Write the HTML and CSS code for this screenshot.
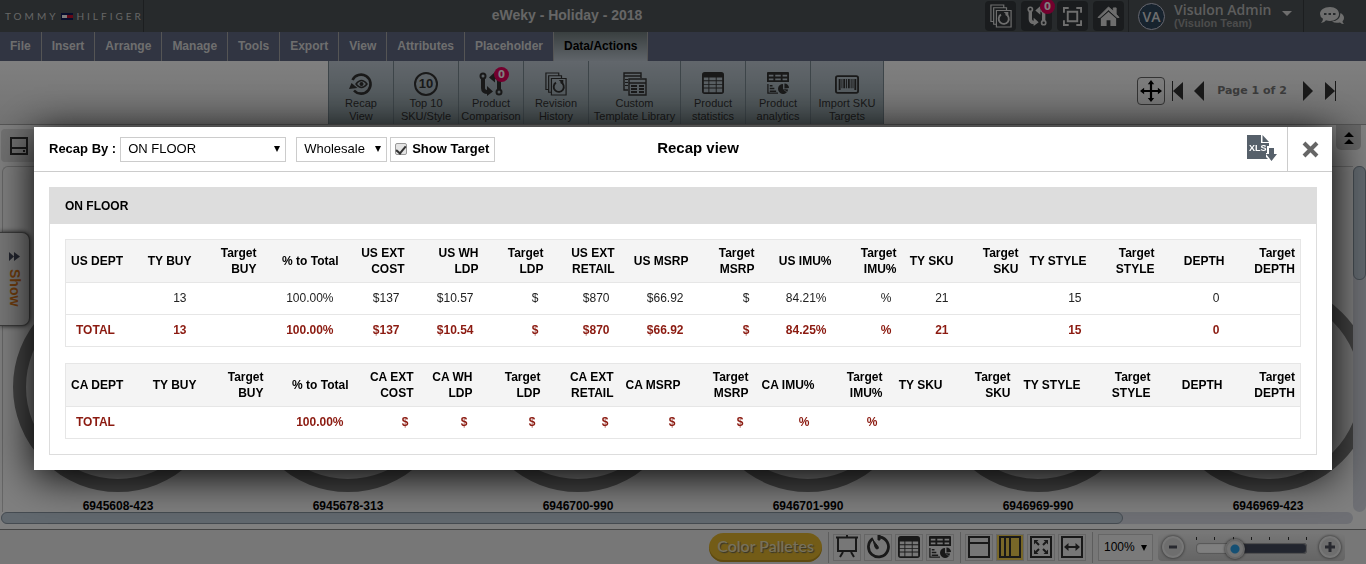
FILE: index.html
```html
<!DOCTYPE html>
<html lang="en">
<head>
<meta charset="utf-8">
<title>eWeky - Holiday - 2018</title>
<link rel="stylesheet" href="styles.css">
</head>
<body>
<svg class="sprite" aria-hidden="true">
  <symbol id="recap" viewBox="0 0 24 24"><path d="M3.500 8A9.500 9.500 0 1 1 5 18.500" fill="none" stroke="currentColor" stroke-width="2.600"/><path d="M0 17l2.500-6 6 5z" fill="currentColor"/><path d="M7 12q5.500-7 11 0q-5.500 7-11 0z" fill="none" stroke="currentColor" stroke-width="1.400"/><circle cx="12.500" cy="12" r="2" fill="currentColor"/></symbol>
  <symbol id="compare" viewBox="0 0 24 24"><g fill="none" stroke="currentColor"><circle cx="4" cy="4" r="2.500" stroke-width="2"/><circle cx="20" cy="20" r="2.500" stroke-width="2"/><path d="M4 7v9q0 4 5 4M20 17V9q0-4-4-4" stroke-width="4"/></g><path d="M8 14l6 5.500L8 24zM16 0L10 5.500l6 5z" fill="currentColor"/></symbol>
  <symbol id="history" viewBox="0 0 24 26"><g fill="none" stroke="currentColor" stroke-width="1.300"><path d="M4 19H1V1h14v3M7 22H4V4h14v3"/><path d="M7 7h16v18H7z"/><path d="M12 11.500a5.500 5.500 0 1 0 5-0.500" stroke-width="2"/></g><path d="M15 8.500h5v5z" fill="currentColor"/></symbol>
  <symbol id="template" viewBox="0 0 24 24"><g fill="none" stroke="currentColor" stroke-width="1.400"><path d="M5 18H1V1h17v5M1 4h17M6 7h17v16H6zM6 11h17"/></g><path d="M8 13h6v2H8zm0 3h6v2H8zm0 3h6v2H8zm8-6h5v2h-5zm0 3h5v2h-5zm0 3h5v2h-5zM2 7h3v1H2zm0 3h3v1H2zm0 3h3v1H2z" fill="currentColor"/></symbol>
  <symbol id="table" viewBox="0 0 24 24"><path d="M3 0h18q3 0 3 3v18q0 3-3 3H3q-3 0-3-3V3q0-3 3-3zM2 6v3h5V6zm6 0v3h7V6zm8 0v3h6V6zM2 10v3h5v-3zm6 0v3h7v-3zm8 0v3h6v-3zM2 14v3h5v-3zm6 0v3h7v-3zm8 0v3h6v-3zM2 18v4h5v-4zm6 0v4h7v-4zm8 0v4h6v-4z" fill="currentColor" fill-rule="evenodd"/></symbol>
  <symbol id="analytics" viewBox="0 0 24 24"><path d="M1 0h22q1 0 1 1v10H0V1q0-1 1-1zM2 3v2h5V3zm7 0v2h6V3zm8 0v2h5V3zM2 7v2h5V7zm7 0v2h6V7zm8 0v2h5V7z" fill="currentColor" fill-rule="evenodd"/><path d="M1 13v10h11M3 15h3M3 18h5M3 21h7" fill="none" stroke="currentColor" stroke-width="1.400"/><path d="M17.500 18.500V13a5.500 5.500 0 1 0 5.500 6z" fill="currentColor"/><path d="M19 12.500a5 5 0 0 1 5 5l-5 .5z" fill="currentColor"/><path d="M18 19l4 3" stroke="#929aa0"/></symbol>
  <symbol id="barcode" viewBox="0 0 26 20"><rect x="1" y="1" width="24" height="18" rx="2" fill="none" stroke="currentColor" stroke-width="2"/><path d="M4 4h2v12H4zm3 0h1v10H7zm2 0h2v10H9zm3 0h1v10h-1zm2 0h2v10h-2zm3 0h1v10h-1zm2 0h1v10h-1zm2 0h2v12h-2z" fill="currentColor"/></symbol>
  <symbol id="expand" viewBox="0 0 20 20"><path d="M1 6V1h5M14 1h5v5M19 14v5h-5M6 19H1v-5M5 5h10v10H5z" fill="none" stroke="currentColor" stroke-width="2"/></symbol>
  <symbol id="home" viewBox="0 0 24 22"><path d="M12 1L1 12h2L12 4l9 8h2L20 8.500V2h-3v3.500z" fill="currentColor" stroke="currentColor"/><path d="M12 6l8 7v8h-6v-6h-4v6H4v-8z" fill="currentColor"/></symbol>
  <symbol id="chat" viewBox="0 0 24 18"><path d="M10 0c5.500 0 9 3 9 7s-4 7-9 7q-2 0-4-.7Q4 16 1 16q2-2 2-4.200Q0 10 0 7c0-4 4-7 10-7z" fill="currentColor"/><path d="M20.500 6q3.500 2 3.500 5 0 2-1.500 3.200 0 1.500 1.500 2.800-2.500 0-4-1.500-5 1-8-1 8-.5 8.500-8.500z" fill="currentColor"/><path d="M4 6h2.500v2H4zm4.500 0H11v2H8.500zM13 6h2.500v2H13z" fill="#4e5558"/></symbol>
  <symbol id="move" viewBox="0 0 24 24"><path d="M12 3v18M3 12h18" stroke="currentColor" stroke-width="2.400"/><path d="M12 0l3.500 4.500h-7zM12 24l3.500-4.500h-7zM0 12l4.500-3.500v7zM24 12l-4.500-3.500v7z" fill="currentColor"/></symbol>
  <symbol id="prev" viewBox="0 0 10 20"><path d="M10 0v20L0 10z" fill="currentColor"/></symbol>
  <symbol id="first" viewBox="0 0 11 20"><path d="M0 0h1v20H0zM11 1v18L1 10z" fill="currentColor"/></symbol>
  <symbol id="disk" viewBox="0 0 18 18"><path d="M1 1h16v16H1zM1 11h16" fill="none" stroke="currentColor" stroke-width="2"/><path d="M13 13h2v2h-2z" fill="currentColor"/></symbol>
  <symbol id="easel" viewBox="0 0 24 24"><path d="M1 2.500h22M3 3v13h18V3M8 17l-3 5M16 17l3 5M12 0v2" fill="none" stroke="currentColor" stroke-width="2"/></symbol>
  <symbol id="timer" viewBox="0 0 24 24"><path d="M7 3.500A10 10 0 1 0 14 2" fill="none" stroke="currentColor" stroke-width="2.800"/><path d="M7 5l5 6.500q1 2-.5 2.500T9 12zM12 0h2v5h-2z" fill="currentColor" stroke="currentColor"/></symbol>
  <symbol id="rows" viewBox="0 0 24 24"><path d="M2 2h20v20H2zM2 8h20" fill="none" stroke="currentColor" stroke-width="2"/></symbol>
  <symbol id="cols" viewBox="0 0 24 24"><path d="M2 2h20v20H2zM7 2v20M12 2v20" fill="none" stroke="currentColor" stroke-width="2"/></symbol>
  <symbol id="fit" viewBox="0 0 24 24"><path d="M2 2h20v20H2zM7 7l3 3M17 7l-3 3M7 17l3-3M17 17l-3-3" fill="none" stroke="currentColor" stroke-width="2"/><path d="M5 5h4.500L5 9.500zM19 5v4.500L14.500 5zM5 19v-4.500L9.500 19zM19 19h-4.500l4.500-4.500z" fill="currentColor"/></symbol>
  <symbol id="wide" viewBox="0 0 24 24"><path d="M2 2h20v20H2zM6 12h12" fill="none" stroke="currentColor" stroke-width="2"/><path d="M4 12l4.500-4v8zM20 12l-4.500-4v8z" fill="currentColor"/></symbol>
</svg>

<header class="topbar">
  <a class="brand" href="#" aria-label="Tommy Hilfiger"><span>TOMMY</span><svg width="12" height="7" viewBox="0 0 12 7"><path d="M0 0h12v7H0z" fill="#131b58"/><path d="M1 2h5v3H1z" fill="#fff"/><path d="M6 2h6v3H6z" fill="#c8102e"/></svg><span>HILFIGER</span></a>
  <h1 class="doc-title">eWeky - Holiday - 2018</h1>
  <div class="quick">
    <button aria-label="History"><svg width="22" height="24"><use href="#history"/></svg></button>
    <button aria-label="Compare"><svg width="20" height="20"><use href="#compare"/></svg><b class="badge">0</b></button>
    <button aria-label="Full screen"><svg width="19" height="19"><use href="#expand"/></svg></button>
    <button aria-label="Home"><svg width="23" height="21"><use href="#home"/></svg></button>
  </div>
  <button class="user"><span class="avatar">VA</span><span class="who"><b>Visulon Admin</b><small>(Visulon Team)</small></span><i class="caret"></i></button>
  <button class="chat" aria-label="Chat"><svg width="24" height="18"><use href="#chat"/></svg></button>
</header>

<nav class="menu">
  <a href="#">File</a><a href="#">Insert</a><a href="#">Arrange</a><a href="#">Manage</a><a href="#">Tools</a><a href="#">Export</a><a href="#">View</a><a href="#">Attributes</a><a href="#">Placeholder</a><a href="#" class="active">Data/Actions</a>
</nav>

<div class="toolbar">
  <div class="tools">
    <button><svg width="24" height="24"><use href="#recap"/></svg><span>Recap<br>View</span></button>
    <button><i class="ten">10</i><span>Top 10<br>SKU/Style</span></button>
    <button><svg width="24" height="24"><use href="#compare"/></svg><b class="badge">0</b><span>Product<br>Comparison</span></button>
    <button><svg width="22" height="24"><use href="#history"/></svg><span>Revision<br>History</span></button>
    <button class="wide"><svg width="24" height="24"><use href="#template"/></svg><span>Custom<br>Template Library</span></button>
    <button><svg class="high" width="22" height="22"><use href="#table"/></svg><span>Product<br>statistics</span></button>
    <button><svg class="high" width="22" height="22"><use href="#analytics"/></svg><span>Product<br>analytics</span></button>
    <button class="mid"><svg class="high" width="24" height="19"><use href="#barcode"/></svg><span>Import SKU<br>Targets</span></button>
  </div>
  <div class="pager">
    <button class="move" aria-label="Move"><svg width="22" height="22"><use href="#move"/></svg></button>
    <button aria-label="First page"><svg width="11" height="20"><use href="#first"/></svg></button>
    <button class="prev" aria-label="Previous page"><svg width="10" height="20"><use href="#prev"/></svg></button>
    <span>Page 1 of 2</span>
    <button class="next" aria-label="Next page"><svg class="flip" width="10" height="20"><use href="#prev"/></svg></button>
    <button aria-label="Last page"><svg class="flip" width="11" height="20"><use href="#first"/></svg></button>
  </div>
</div>

<main class="stage">
  <button class="save" aria-label="Save"><svg width="18" height="18"><use href="#disk"/></svg></button>
  <button class="collapse" aria-label="Collapse"><svg width="10" height="12" viewBox="0 0 10 12"><path d="M5 0l5 5H0zM5 7l5 5H0z"/></svg></button>
  <button class="show"><svg width="11" height="9" viewBox="0 0 11 9"><path d="M0 0l5 4.500L0 9zM5 0l6 4.500L5 9z" fill="#454a5c"/></svg><span>Show</span></button>
  <div class="canvas">
    <div class="items">
      <figure><div class="ring"></div><figcaption>6945608-423</figcaption></figure>
      <figure><div class="ring"></div><figcaption>6945678-313</figcaption></figure>
      <figure><div class="ring"></div><figcaption>6946700-990</figcaption></figure>
      <figure><div class="ring"></div><figcaption>6946701-990</figcaption></figure>
      <figure><div class="ring"></div><figcaption>6946969-990</figcaption></figure>
      <figure><div class="ring"></div><figcaption>6946969-423</figcaption></figure>
    </div>
    <div class="vscroll"><i></i></div>
  </div>
  <div class="hscroll"><i></i></div>
</main>

<footer class="status">
  <button class="palette">Color Palletes</button>
  <div class="group">
    <button aria-label="Present"><svg width="24" height="24"><use href="#easel"/></svg></button>
    <button aria-label="Timer"><svg width="24" height="24"><use href="#timer"/></svg></button>
    <button aria-label="Statistics"><svg width="22" height="22"><use href="#table"/></svg></button>
    <button aria-label="Analytics"><svg width="22" height="22"><use href="#analytics"/></svg></button>
  </div>
  <div class="group">
    <button aria-label="Rows"><svg width="24" height="24"><use href="#rows"/></svg></button>
    <button class="on" aria-label="Columns"><svg width="24" height="24"><use href="#cols"/></svg></button>
    <button aria-label="Fit page"><svg width="24" height="24"><use href="#fit"/></svg></button>
    <button aria-label="Fit width"><svg width="24" height="24"><use href="#wide"/></svg></button>
  </div>
  <div class="group zoom">
    <span class="pick"><select aria-label="Zoom level"><option>100%</option></select></span>
    <div class="slider">
      <button aria-label="Zoom out"><svg width="10" height="10" viewBox="0 0 10 10"><path d="M1 5h8" stroke="#50535f" stroke-width="3"/></svg></button>
      <div class="track"><div class="ticks"><i></i><i></i><i></i><i></i><i></i><i></i><i></i></div><input type="range" min="0" max="100" value="32" aria-label="Zoom"></div>
      <button aria-label="Zoom in"><svg width="10" height="10" viewBox="0 0 10 10"><path d="M0 5h10M5 0v10" stroke="#50535f" stroke-width="3"/></svg></button>
    </div>
  </div>
</footer>

<div class="overlay">
  <section class="dialog" role="dialog" aria-labelledby="dlg-title">
    <div class="dlg-head">
      <form class="filters">
        <label for="by">Recap By :</label>
        <span class="pick floor"><select id="by"><option>ON FLOOR</option></select></span>
        <span class="pick price"><select aria-label="Price type"><option>Wholesale</option></select></span>
        <label class="check"><input type="checkbox" checked>Show Target</label>
      </form>
      <h2 id="dlg-title">Recap view</h2>
      <div class="dlg-actions">
        <button class="xls" aria-label="Download XLS"><svg width="30" height="27" viewBox="0 0 30 27"><path d="M0 0h14v8h8v3h-2v7h-1v4l2 2H0z" fill="#56606a"/><path d="M15.500 0L22 7h-6.500zM22 13h5v6h3l-5.500 7L19 19h3z" fill="#56606a"/><text x="2" y="16">XLS</text></svg></button>
        <button class="close" aria-label="Close"><svg width="17" height="17" viewBox="0 0 17 17"><path d="M2 2l13 13M15 2L2 15" stroke="#666" stroke-width="4"/></svg></button>
      </div>
    </div>
    <div class="dlg-body">
      <section class="panel">
        <h3>ON FLOOR</h3>
        <div class="panel-body">
          <table class="us">
            <colgroup><col><col><col><col><col><col><col><col><col><col><col><col><col><col><col><col><col><col></colgroup>
            <thead><tr><th>US DEPT</th><th>TY BUY</th><th>Target<br>BUY</th><th>% to Total</th><th>US EXT<br>COST</th><th>US WH<br>LDP</th><th>Target<br>LDP</th><th>US EXT<br>RETAIL</th><th>US MSRP</th><th>Target<br>MSRP</th><th>US IMU%</th><th>Target<br>IMU%</th><th>TY SKU</th><th>Target<br>SKU</th><th>TY STYLE</th><th>Target<br>STYLE</th><th>DEPTH</th><th>Target<br>DEPTH</th></tr></thead>
            <tbody>
              <tr><td></td><td>13</td><td></td><td>100.00%</td><td>$137</td><td>$10.57</td><td>$</td><td>$870</td><td>$66.92</td><td>$</td><td>84.21%</td><td>%</td><td>21</td><td></td><td>15</td><td></td><td>0</td><td></td></tr>
              <tr class="total"><td>TOTAL</td><td>13</td><td></td><td>100.00%</td><td>$137</td><td>$10.54</td><td>$</td><td>$870</td><td>$66.92</td><td>$</td><td>84.25%</td><td>%</td><td>21</td><td></td><td>15</td><td></td><td>0</td><td></td></tr>
            </tbody>
          </table>
          <table class="ca">
            <colgroup><col><col><col><col><col><col><col><col><col><col><col><col><col><col><col><col><col><col></colgroup>
            <thead><tr><th>CA DEPT</th><th>TY BUY</th><th>Target<br>BUY</th><th>% to Total</th><th>CA EXT<br>COST</th><th>CA WH<br>LDP</th><th>Target<br>LDP</th><th>CA EXT<br>RETAIL</th><th>CA MSRP</th><th>Target<br>MSRP</th><th>CA IMU%</th><th>Target<br>IMU%</th><th>TY SKU</th><th>Target<br>SKU</th><th>TY STYLE</th><th>Target<br>STYLE</th><th>DEPTH</th><th>Target<br>DEPTH</th></tr></thead>
            <tbody>
              <tr class="total"><td>TOTAL</td><td></td><td></td><td>100.00%</td><td>$</td><td>$</td><td>$</td><td>$</td><td>$</td><td>$</td><td>%</td><td>%</td><td></td><td></td><td></td><td></td><td></td><td></td></tr>
            </tbody>
          </table>
        </div>
      </section>
    </div>
  </section>
</div>
</body>
</html>
```

FILE: styles.css
```css
* { box-sizing: border-box; }
html, body { height: 100%; }
body { margin: 0; display: flex; flex-direction: column; overflow: hidden; background: #fff; color: #000; font: 12px/16px "Liberation Sans", Arial, sans-serif; }
button, select, input { font: inherit; color: inherit; }
button { display: flex; align-items: center; justify-content: center; margin: 0; padding: 0; border: 0; background: none; }
svg { display: block; flex: none; }
a { color: inherit; text-decoration: none; }
h1, h2, h3, figure { margin: 0; }
.sprite { position: absolute; width: 0; height: 0; }

/* top bar */
.topbar { position: relative; flex: none; display: flex; height: 32px; background: #4e5558; color: #ddd; }
.brand { display: flex; align-items: center; gap: 3px; width: 144px; padding-left: 5px; border-right: 1px solid #383d40; color: #ccc; font: 10px/32px Lato, sans-serif; letter-spacing: 3px; }
.doc-title { flex: 1; padding-left: 5px; text-align: center; font-size: 14px; line-height: 31px; color: #ccc; }
.quick { display: flex; gap: 5px; padding: 1px 4px 1px 0; border-right: 1px solid #383d40; }
.quick button { position: relative; width: 31px; border-radius: 4px; background: #34393c; }
.badge { position: absolute; display: flex; align-items: center; justify-content: center; width: 15px; height: 15px; border-radius: 8px; background: #e6005c; color: #fff; font: 700 10px/15px "DejaVu Sans", sans-serif; }
.quick .badge { top: -2px; right: -3px; }
.user { gap: 9px; width: 175px; padding-left: 9px; justify-content: flex-start; border-right: 1px solid #383d40; }
.avatar { width: 27px; height: 27px; border: 1px solid #ccd; border-radius: 14px; background: #2e465c; text-align: center; font: 600 14px/25px "Open Sans", sans-serif; }
.who { display: flex; flex-direction: column; text-align: left; line-height: 12px; }
.who b { font: 600 14px/14px "Open Sans", sans-serif; color: #bbb; }
.who small { font-size: 11px; font-weight: 700; color: #999; }
.caret { width: 0; border: 5px solid transparent; border-top-color: #ddd; border-bottom: 0; margin-bottom: 6px; margin-left: 2px; }
.chat { width: 62px; padding-right: 6px; }

/* menu */
.menu { flex: none; display: flex; height: 29px; background: #626a84; color: #fff; font-weight: 700; }
.menu a { padding: 0 10px; border-right: 1px solid #aaa; line-height: 28px; color: #ddd; }
.menu .active { background: linear-gradient(#737f80, #c0cad4); color: #000; }

/* toolbar */
.toolbar { flex: none; display: flex; justify-content: space-between; height: 64px; background: linear-gradient(#fff, #e6e6e6); border-bottom: 1px solid #aaa; }
.tools { display: flex; margin-left: 328px; border-right: 1px solid #7b8b93; color: #333; }
.tools button { position: relative; flex-direction: column; justify-content: flex-end; gap: 1px; width: 65px; padding-bottom: 1px; border-left: 1px solid #7b8b93; background: linear-gradient(#c4ced8, #8fa0a4); font-size: 11px; line-height: 13px; }
.tools .wide { width: 92px; }
.tools .mid { width: 73px; }
.tools .high { margin-bottom: 2px; }
.tools .badge { top: 6px; right: 14px; }
.ten { width: 24px; height: 24px; border: 2px solid #333; border-radius: 12px; font: 700 13px/20px "Liberation Sans", sans-serif; }
.pager { display: flex; align-items: center; padding: 0 30px 4px 0; color: #333; }
.pager span { width: 96px; text-align: center; color: #777; font: 700 11px/16px "DejaVu Sans", sans-serif; }
.pager .move { width: 28px; height: 28px; margin-right: 7px; border: 1px solid #666; border-radius: 4px; color: #000; }
.pager .prev { margin-left: 11px; }
.pager .next { margin-right: 12px; margin-left: 3px; }
.flip { transform: scaleX(-1); }

/* stage */
.stage { position: relative; z-index: 0; flex: 1; min-height: 0; display: flex; flex-direction: column; padding-top: 41px; background: #fff; }
.save { position: absolute; left: 1px; top: 4px; width: 35px; height: 33px; border-radius: 4px; background: #e2e2e2; color: #333; }
.collapse { position: absolute; right: 5px; top: 0; width: 25px; height: 25px; border-radius: 0 0 5px 5px; background: #ccc; }
.show { position: absolute; z-index: 1; left: 0; top: 107px; width: 30px; height: 94px; flex-direction: column; gap: 8px; border: 1px solid #777; border-left: 0; border-radius: 0 8px 8px 0; background: #eee; box-shadow: 0 0 5px #333; }
.show span { writing-mode: vertical-rl; color: #e07a1a; font: 700 14px/16px "Liberation Sans", sans-serif; }
.canvas { flex: 1; min-height: 0; display: flex; justify-content: space-between; }
.items { flex: 1; display: flex; align-items: flex-end; overflow: hidden; margin-left: 2px; border: 1px solid #ccc; border-width: 1px 0 0 1px; border-radius: 6px 0 0; }
.items figure { flex: none; width: 230px; display: flex; flex-direction: column; align-items: center; gap: 9px; }
.ring { width: 210px; height: 210px; border: 13px solid #868686; border-radius: 50%; background: #f0f0f0; }
figcaption { line-height: 11px; font-weight: 700; }
.vscroll { flex: none; width: 13px; border-radius: 7px; background: #dcdfe8; }
.vscroll i { display: block; height: 114px; border: 1px solid #8a97a3; border-radius: 6px; background: #c3d0dc; }
.hscroll { flex: none; margin: 0 13px 5px 1px; height: 12px; border-radius: 6px; background: #dcdfe8; }
.hscroll i { display: block; width: 83%; height: 12px; border: 1px solid #8a97a3; border-radius: 6px; background: #c3d0dc; }

/* status bar */
.status { flex: none; display: flex; align-items: center; justify-content: flex-end; gap: 6px; height: 35px; padding-right: 21px; border-top: 1px solid #888; background: #efefef; }
.palette { width: 113px; height: 29px; padding-bottom: 3px; border-radius: 15px; background: #e6b82e; box-shadow: inset 0 -2px 0 #bd9520; color: #eee2b8; font: 500 16px/26px Lato, sans-serif; text-shadow: 1px 1px 1px #665; }
.group { display: flex; align-items: center; gap: 3px; padding-left: 4px; border-left: 1px solid #bbb; height: 31px; }
.group > button { width: 28px; height: 27px; border: 1px solid #ccc; color: #333; }
.group .on { background: #f0cf50; }
.zoom { gap: 5px; padding-left: 5px; }
.pick { position: relative; display: block; }
.pick select { appearance: none; width: 100%; height: 25px; margin: 0; padding: 0 7px; border: 1px solid #ccc; border-radius: 0; background: #fff; }
.pick::after { content: ""; position: absolute; right: 6px; top: 9px; border: 3px solid transparent; border-top: 6px solid #000; border-bottom: 0; pointer-events: none; }
.zoom .pick { width: 55px; }
.zoom .pick select { height: 27px; padding: 0 5px; background: #f4f4f4; }
.zoom .pick::after { top: 11px; }
.slider { display: flex; align-items: center; gap: 12px; width: 187px; height: 27px; padding: 0 4px; border-radius: 4px; background: linear-gradient(#ececec, #c9c9c9); }
.slider button { flex: none; width: 22px; height: 22px; border: 2px solid #eee; border-radius: 11px; background: #ddd; box-shadow: 0 0 3px #444; }
.track { flex: 1; min-width: 0; display: flex; flex-direction: column; gap: 3px; padding-bottom: 3px; }
.ticks { display: flex; justify-content: space-between; height: 3px; }
.ticks i { width: 1px; background: #333; }
.track input { appearance: none; width: 100%; height: 11px; margin: 0; border-radius: 4px; background: linear-gradient(90deg, #fff 34%, #454b5c 34%); box-shadow: inset 0 0 1px 1px #aaa; }
.track input::-webkit-slider-thumb { appearance: none; width: 20px; height: 20px; border: 2px solid #ccc; border-radius: 10px; background: radial-gradient(circle, #2aa0e8 0 4px, #e4e4e4 5px); box-shadow: 0 0 3px #333; }

/* dialog */
.overlay { position: fixed; z-index: 1; inset: 0; padding: 127px 34px 0; background: rgba(0, 0, 0, .5); }
.dialog { background: #fff; box-shadow: 0 6px 40px #000; }
.dlg-head { display: grid; grid-template-columns: 1fr auto 1fr; height: 45px; border-bottom: 1px solid #ccc; }
.filters { display: flex; align-items: center; padding-left: 15px; font-size: 13px; }
.filters > label { font-weight: 700; white-space: nowrap; }
.floor { width: 166px; margin: 0 10px 0 4px; }
.price { width: 91px; margin-right: 3px; }
.check { display: flex; align-items: center; gap: 5px; height: 25px; padding: 0 5px 0 4px; border: 1px solid #ccc; }
.check input { appearance: none; display: flex; justify-content: center; width: 12px; height: 12px; margin: 0; border: 1px solid #999; border-radius: 2px; background: #e4e4e4; }
.check input::after { content: ""; width: 4px; height: 8px; border: solid #333; border-width: 0 2px 2px 0; transform: rotate(40deg); }
.dlg-head h2 { padding: 0 0 3px 30px; align-self: center; font-size: 15px; line-height: 20px; }
.dlg-actions { display: flex; justify-content: flex-end; }
.xls { margin-right: 10px; padding-bottom: 1px; }
.xls text { fill: #fff; font: 700 9px "Liberation Sans", sans-serif; }
.close { width: 45px; border-left: 1px solid #ccc; }
.dlg-body { padding: 15px; }
.panel { border: 1px solid #ddd; }
.panel h3 { padding: 0 15px; background: #ddd; font-size: 12px; line-height: 36px; }
.panel-body { display: flex; flex-direction: column; gap: 16px; padding: 15px; }
table { width: 100%; table-layout: fixed; border-collapse: collapse; border: 1px solid #e6e6e6; }
th { padding: 5px; background: #f4f4f4; text-align: right; white-space: nowrap; }
td { height: 32px; padding: 0 10px 2px; border-top: 1px solid #e6e6e6; text-align: right; color: #222; }
th:first-child, td:first-child { text-align: left; }
.total td { color: #8b1a10; font-weight: 700; }
.us col:nth-child(1) { width: 64px; }
.us col:nth-child(2) { width: 67px; }
.us col:nth-child(4) { width: 82px; }
.us col:nth-child(5), .us col:nth-child(10) { width: 66px; }
.us col:nth-child(6), .us col:nth-child(9) { width: 74px; }
.us col:nth-child(3), .us col:nth-child(7), .us col:nth-child(12), .us col:nth-child(14) { width: 65px; }
.us col:nth-child(8), .us col:nth-child(18) { width: 71px; }
.us col:nth-child(11) { width: 77px; }
.us col:nth-child(13) { width: 57px; }
.us col:nth-child(15), .us col:nth-child(16) { width: 68px; }
.us col:nth-child(17) { width: 70px; }
.ca col:nth-child(1), .ca col:nth-child(11) { width: 66px; }
.ca col:nth-child(2), .ca col:nth-child(15), .ca col:nth-child(16) { width: 70px; }
.ca col:nth-child(3), .ca col:nth-child(9) { width: 67px; }
.ca col:nth-child(4) { width: 85px; }
.ca col:nth-child(5) { width: 65px; }
.ca col:nth-child(6) { width: 59px; }
.ca col:nth-child(7), .ca col:nth-child(10), .ca col:nth-child(12), .ca col:nth-child(14) { width: 68px; }
.ca col:nth-child(8), .ca col:nth-child(18) { width: 73px; }
.ca col:nth-child(13) { width: 60px; }
.ca col:nth-child(17) { width: 72px; }
```
